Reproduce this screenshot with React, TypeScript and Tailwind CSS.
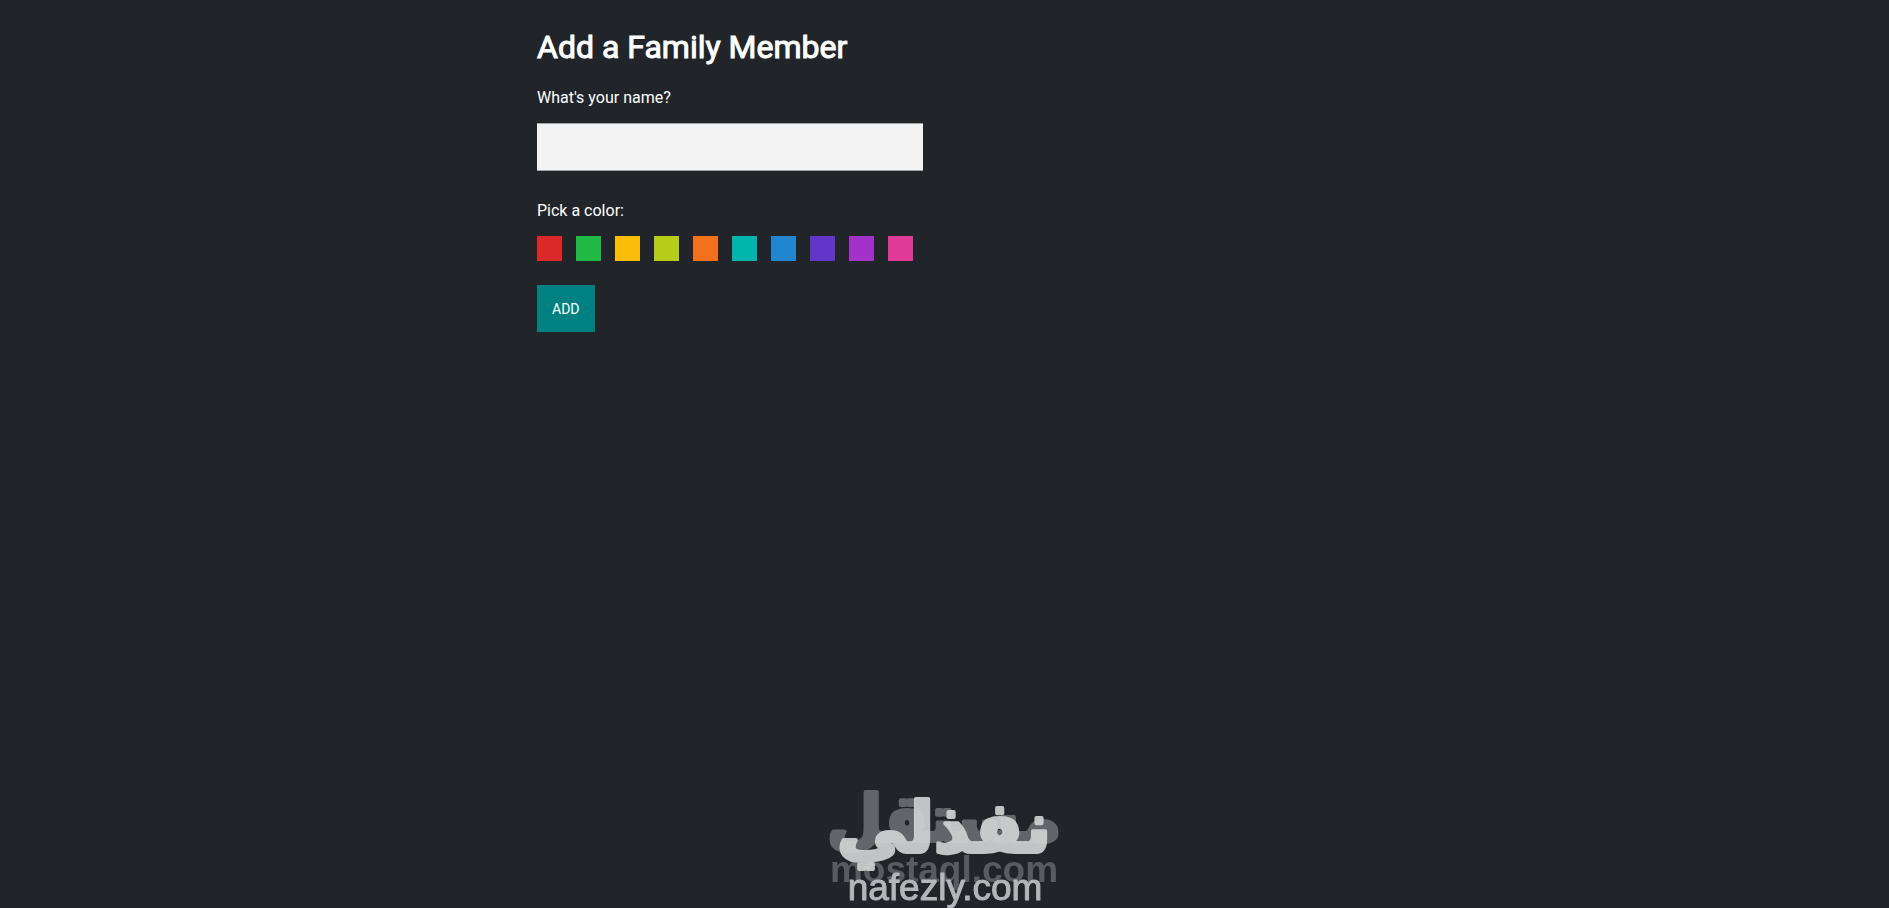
import React, { useState } from 'react';

interface Swatch {
  name: string;
  className: string;
}

const swatches: Swatch[] = [
  { name: 'red', className: 'bg-[#db2828]' },
  { name: 'green', className: 'bg-[#21ba45]' },
  { name: 'yellow', className: 'bg-[#fbbd08]' },
  { name: 'olive', className: 'bg-[#b5cc18]' },
  { name: 'orange', className: 'bg-[#f2711c]' },
  { name: 'teal', className: 'bg-[#00b5ad]' },
  { name: 'blue', className: 'bg-[#2185d0]' },
  { name: 'violet', className: 'bg-[#6435c9]' },
  { name: 'purple', className: 'bg-[#a333c8]' },
  { name: 'pink', className: 'bg-[#e03997]' }
];

const Watermark: React.FC = () => (
  <svg
    className="pointer-events-none fixed bottom-0 left-1/2 h-[133px] w-[250px] -translate-x-1/2"
    viewBox="0 0 250 133"
    aria-hidden="true"
  >
    <g strokeLinejoin="round" textAnchor="middle" fontWeight="bold">
      <text x="124" y="66" fontSize="64" fill="#626569" stroke="#626569" strokeWidth="4" direction="rtl" fontFamily="'DejaVu Sans', sans-serif">مستقل</text>
      <text x="124" y="107" fontSize="37" fill="#585b5f" fontFamily="'Liberation Sans', Arial, sans-serif">mostaql.com</text>
    </g>
    <g strokeLinejoin="round" textAnchor="middle" opacity="0.92">
      <text x="124" y="77" fontSize="70" fill="#d0d2d3" stroke="#d0d2d3" strokeWidth="4" fontWeight="bold" direction="rtl" fontFamily="'DejaVu Sans', sans-serif">نفذلي</text>
      <text x="125" y="125" fontSize="37" fill="#bfc3c5" stroke="#bfc3c5" strokeWidth="1" fontFamily="'Liberation Sans', Arial, sans-serif">nafezly.com</text>
    </g>
  </svg>
);

const App: React.FC = () => {
  const [name, setName] = useState('');
  const [color, setColor] = useState('');

  return (
    <div className="min-h-screen bg-[#212529] font-[Roboto,sans-serif] text-white">
      <main className="mx-auto max-w-[815px] pt-6">
        <h1 className="text-[32px] leading-[46px] font-normal [-webkit-text-stroke:1px_white]">Add a Family Member</h1>
        <form onSubmit={(e) => e.preventDefault()}>
          <label htmlFor="name" className="mt-4 block text-base leading-6">
            What's your name?
          </label>
          <input
            id="name"
            type="text"
            value={name}
            onChange={(e) => setName(e.target.value)}
            className="mt-[13px] block h-12 w-[386px] max-w-full border-y border-[#a5a5a7] bg-[#f3f3f3] px-4 text-base text-black outline-none"
          />

          <fieldset className="mt-7">
            <legend className="text-base leading-6">Pick a color:</legend>
            <div className="mt-[13px] flex flex-wrap gap-[14px]">
              {swatches.map((swatch) => (
                <input
                  key={swatch.name}
                  type="radio"
                  name="color"
                  value={swatch.name}
                  aria-label={swatch.name}
                  checked={color === swatch.name}
                  onChange={() => setColor(swatch.name)}
                  className={`size-[25px] cursor-pointer appearance-none checked:outline-2 checked:outline-white ${swatch.className}`}
                />
              ))}
            </div>
          </fieldset>

          <button type="submit" className="mt-6 h-[47px] cursor-pointer bg-[#008080] px-[15px] text-sm">
            ADD
          </button>
        </form>
      </main>
      <Watermark />
    </div>
  );
};

export default App;
